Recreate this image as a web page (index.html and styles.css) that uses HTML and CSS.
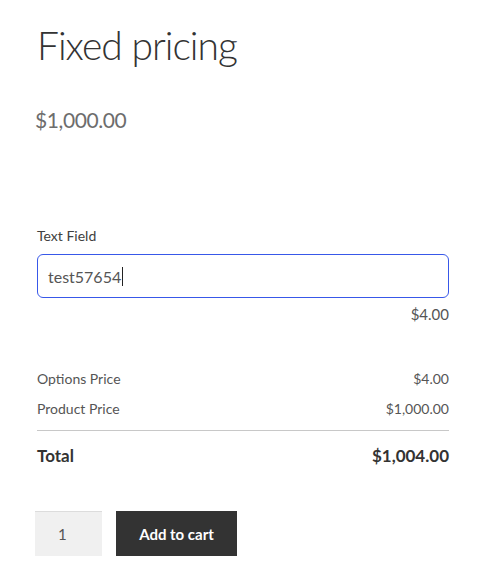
FILE: index.html
```html
<!DOCTYPE html>
<html>
<head>
<meta charset="utf-8">
<link rel="stylesheet" href="styles.css">
</head>
<body>
<div class="product">
  <h1 class="title">Fixed pricing</h1>
  <p class="price">$1,000.00</p>
  <div class="field">
    <label class="label">Text Field</label>
    <div class="input">test57654<span class="caret"></span></div>
    <div class="field-price">$4.00</div>
  </div>
  <div class="totals">
    <div class="row"><span>Options Price</span><span>$4.00</span></div>
    <div class="row"><span>Product Price</span><span>$1,000.00</span></div>
    <div class="row total"><span>Total</span><span>$1,004.00</span></div>
  </div>
  <div class="cart">
    <div class="qty">1</div>
    <button class="add">Add to cart</button>
  </div>
</div>
</body>
</html>
```

FILE: styles.css
```css
html, body {
  margin: 0;
  padding: 0;
  background: #ffffff;
}
body {
  font-family: "Lato", "Open Sans", sans-serif;
  color: #404040;
}
.product {
  width: 412px;
  padding: 20px 0 0 37px;
}
.title {
  margin: 0;
  font-size: 39px;
  line-height: 50px;
  font-weight: 300;
  color: #333333;
  letter-spacing: -1px;
}
.price {
  margin: 36px 0 0 -2px;
  font-size: 21px;
  line-height: 28px;
  color: #6d6d6d;
  letter-spacing: -0.4px;
}
.field {
  margin-top: 92px;
}
.label {
  display: block;
  font-size: 14px;
  line-height: 20px;
  color: #404040;
}
.input {
  margin-top: 8px;
  height: 42px;
  border: 1px solid #3858e9;
  border-radius: 6px;
  padding: 0 10px;
  display: flex;
  align-items: center;
  font-size: 16px;
  color: #555555;
}
.caret {
  display: inline-block;
  width: 1px;
  height: 19px;
  background: #222;
  margin-left: 1px;
}
.field-price {
  margin-top: 6px;
  text-align: right;
  font-size: 15px;
  line-height: 20px;
  color: #555555;
}
.totals {
  margin-top: 40px;
}
.row {
  display: flex;
  justify-content: space-between;
  font-size: 14px;
  line-height: 30px;
  color: #555555;
}
.row:nth-child(2) {
  border-bottom: 1px solid #c8c8c8;
  padding-bottom: 6px;
}
.total {
  padding-top: 7px;
  font-weight: 700;
  font-size: 17px;
  line-height: 36px;
  color: #333333;
}
.cart {
  display: flex;
  gap: 14px;
  margin-top: 37px;
  margin-left: -2px;
}
.qty {
  width: 67px;
  height: 45px;
  box-sizing: border-box;
  padding-left: 23px;
  background: #f0f0f0;
  box-shadow: inset 0 1px 0 #dcdcdc;
  display: flex;
  align-items: center;
  font-size: 15px;
  color: #555;
}
.add {
  width: 121px;
  height: 45px;
  border: 0;
  background: #333333;
  color: #ffffff;
  font-family: inherit;
  font-weight: 700;
  font-size: 15px;
  padding: 0;
}
```
